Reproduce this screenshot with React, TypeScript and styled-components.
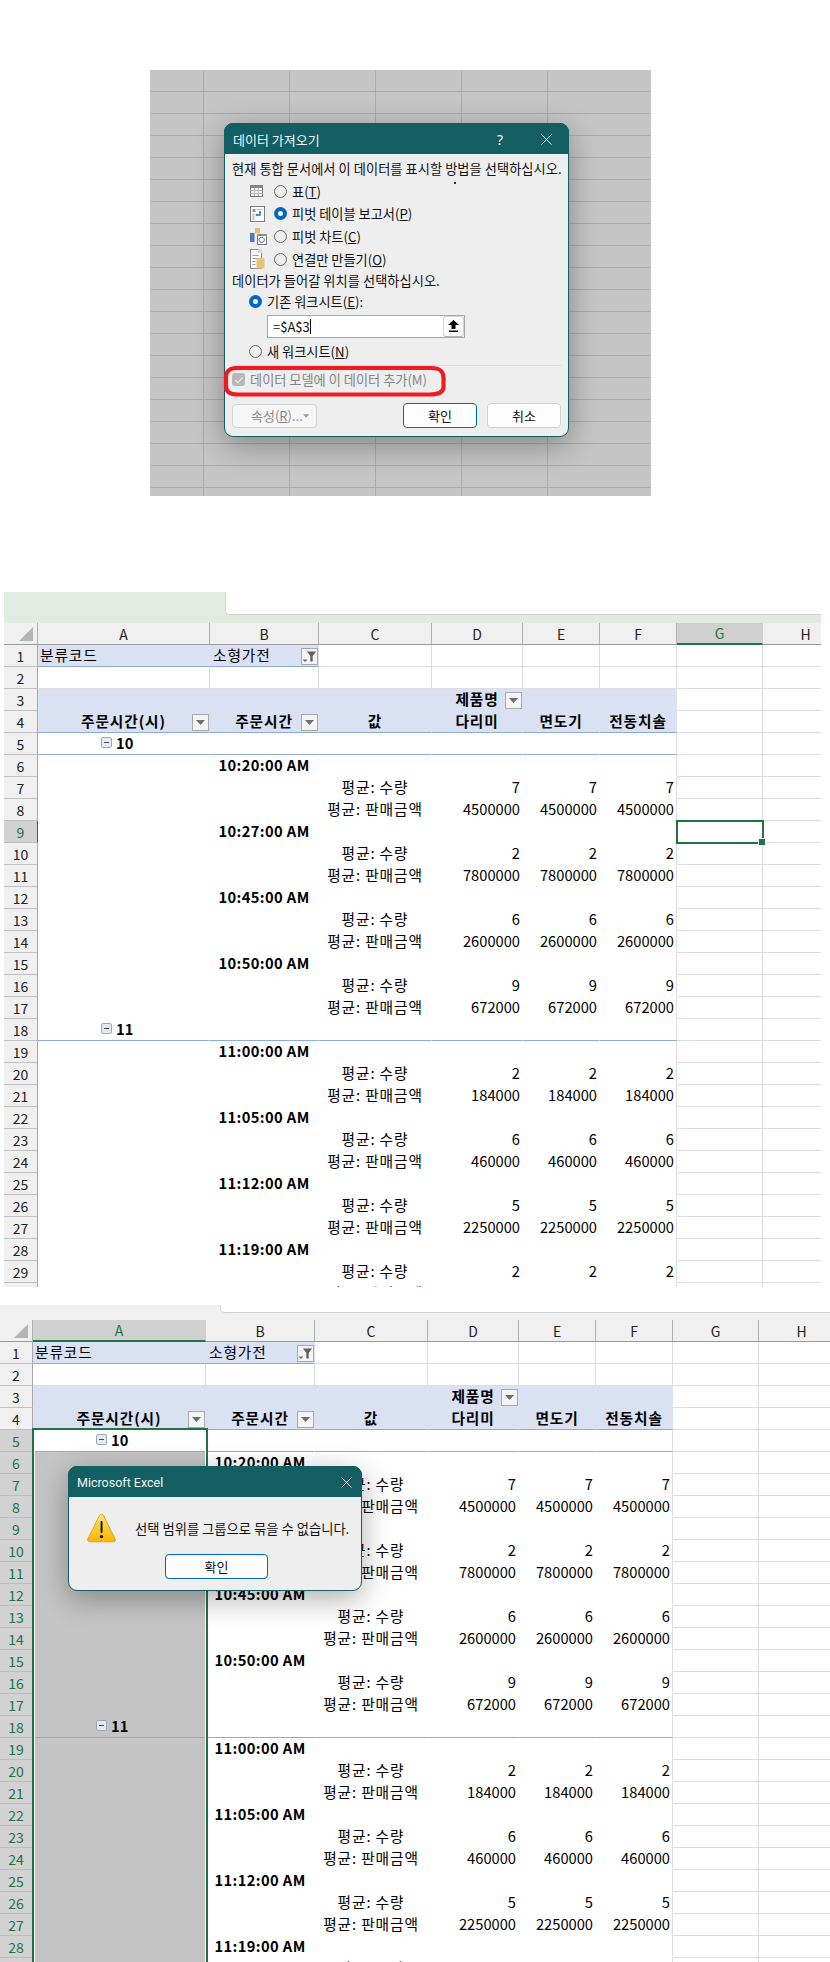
import { Fragment, ReactNode } from "react";
import styled, { createGlobalStyle, css } from "styled-components";

const uiFont = `"Noto Sans CJK KR", "Noto Sans", sans-serif`;
const teal = "#125e62";
const excelGreen = "#217346";
const pivotFill = "#d9e1f2";
const pivotLine = "#8ea9db";
const gridLine = "#dedede";

const GlobalStyle = createGlobalStyle`
  html, body {
    margin: 0;
    background: #fff;
  }
  body {
    font-family: ${uiFont};
    color: #000;
  }
`;

const Page = styled.div`
  width: 830px;
  height: 1962px;
  overflow: hidden;
  padding-top: 70px;
  box-sizing: border-box;
`;

/* ---------- dialog parts ---------- */

const backdropColumns = [53, 139, 225, 311, 397];

const BackdropPanel = styled.div`
  width: 501px;
  height: 426px;
  margin-left: 150px;
  box-sizing: border-box;
  padding: 53px 0 0 74px;
  overflow: hidden;
  background-color: #c5c5c5;
  background-image: ${backdropColumns.map(() => "linear-gradient(#acacac, #acacac)").join(", ")},
    linear-gradient(#acacac 1px, transparent 1px);
  background-size: ${backdropColumns.map(() => "1px 100%").join(", ")}, 100% 22px;
  background-position: ${backdropColumns.map((x) => `${x}px 0`).join(", ")}, 0 21px;
  background-repeat: ${backdropColumns.map(() => "no-repeat").join(", ")}, repeat;
`;

const Dialog = styled.div<{ $width: number }>`
  position: relative;
  width: ${(p) => p.$width}px;
  box-sizing: border-box;
  border: 1px solid ${teal};
  border-radius: 9px;
  background: #eeeeee;
  box-shadow: 0 8px 30px rgba(0, 0, 0, 0.32);
`;

const FloatingDialog = styled(Dialog)`
  position: absolute;
  left: 68px;
  top: 161px;
  z-index: 5;
`;

const TitleBar = styled.div`
  height: 30px;
  display: flex;
  align-items: center;
  margin: -1px -1px 0;
  padding-top: 1px;
  background: ${teal};
  border-radius: 9px 9px 0 0;
  color: #f2f7f7;
`;

const TitleText = styled.div<{ $latin?: boolean }>`
  flex: 1;
  padding-left: 9px;
  font-size: ${(p) => (p.$latin ? "12.5px" : "13px")};
  font-family: ${(p) => (p.$latin ? `Roboto, sans-serif` : uiFont)};
`;

const TitleButton = styled.div<{ $width: number }>`
  width: ${(p) => p.$width}px;
  display: flex;
  justify-content: center;
  font-size: 14px;
  font-family: "Noto Sans", sans-serif;
`;

const DialogBody = styled.div`
  padding: 4px 7px 8px;
  font-size: 13.2px;
  color: #111;
`;

const Prompt = styled.div<{ $height: number }>`
  height: ${(p) => p.$height}px;
  line-height: ${(p) => p.$height}px;
  white-space: nowrap;
  letter-spacing: 0.06px;
`;

const OptionRow = styled.div`
  height: 22.67px;
  display: flex;
  align-items: center;
  padding-left: 18px;
`;

const IconSlot = styled.div`
  width: 24px;
  height: 22px;
  display: flex;
  align-items: center;
`;

const TargetRow = styled.div<{ $top: number }>`
  height: 22px;
  margin-top: ${(p) => p.$top}px;
  display: flex;
  align-items: center;
  padding-left: 17px;
`;

const Radio = styled.span<{ $on?: boolean }>`
  width: 13px;
  height: 13px;
  flex: none;
  margin-right: 5px;
  border-radius: 50%;
  box-sizing: border-box;
  background: ${(p) => (p.$on ? "#fff" : "transparent")};
  border: ${(p) => (p.$on ? "4px solid #0067c0" : "1px solid #666")};
`;

const Hotkey = styled.span`
  text-decoration: underline;
`;

const RangeField = styled.div`
  width: 198px;
  height: 23px;
  box-sizing: border-box;
  margin: 2px 0 0 35px;
  padding-left: 5px;
  display: flex;
  align-items: center;
  justify-content: space-between;
  background: #fff;
  border: 1px solid #a8a8a8;
  font-size: 13px;
`;

const RangeText = styled.span`
  display: flex;
  align-items: center;
`;

const Caret = styled.span`
  width: 1px;
  height: 15px;
  background: #000;
`;

const RangeButton = styled.span`
  width: 21px;
  height: 21px;
  display: flex;
  align-items: center;
  justify-content: center;
  box-sizing: border-box;
  border: 1px solid #d4d4d4;
  border-bottom-color: #b5b5b5;
  border-radius: 3px;
  background: #fbfbfb;
`;

const Divider = styled.div`
  height: 1px;
  margin-top: 2px;
  background: #dcdcdc;
`;

const CheckRow = styled.div`
  height: 28px;
  display: flex;
  align-items: center;
  gap: 5px;
  color: #858585;
`;

const CheckBox = styled.span`
  width: 13px;
  height: 13px;
  border-radius: 3px;
  background: #b8b8b8;
  display: flex;
  align-items: center;
  justify-content: center;
`;

const Actions = styled.div`
  margin-top: 9px;
  height: 25px;
  display: flex;
  align-items: flex-end;
`;

const PushButton = styled.div<{ $width: number; $primary?: boolean; $left?: number }>`
  width: ${(p) => p.$width}px;
  height: 25px;
  margin-left: ${(p) => p.$left ?? 0}px;
  box-sizing: border-box;
  display: flex;
  align-items: center;
  justify-content: center;
  border-radius: 4px;
  font-size: 13px;
  background: #fdfdfd;
  color: #111;
  border: 1px solid ${(p) => (p.$primary ? "#0067c0" : "#d2d2d2")};
`;

const DisabledSplitButton = styled.div`
  width: 85px;
  height: 24px;
  box-sizing: border-box;
  padding: 0 7px 0 18px;
  display: flex;
  align-items: center;
  justify-content: space-between;
  border-radius: 4px;
  font-size: 13px;
  white-space: nowrap;
  background: #f6f6f6;
  color: #8a8a8a;
  border: 1px solid #d2d2d2;
`;

const RedMark = styled.svg`
  position: absolute;
  left: -2px;
  top: 241px;
`;

const StrayDot = styled.span`
  position: absolute;
  left: 229px;
  top: 58px;
  width: 2px;
  height: 2px;
  background: #333;
`;

const AlertRow = styled.div`
  display: flex;
  align-items: center;
  gap: 19px;
  padding: 16px 0 0 18px;
  font-size: 13.3px;
  white-space: nowrap;
  color: #111;
`;

const AlertActions = styled.div`
  display: flex;
  padding: 11px 0 11px 96px;
`;

/* ---------- sheet parts ---------- */

const SheetFrame = styled.div<{ $left: number; $top: number; $width: number; $height: number }>`
  position: relative;
  margin: ${(p) => p.$top}px 0 0 ${(p) => p.$left}px;
  width: ${(p) => p.$width}px;
  height: ${(p) => p.$height}px;
  overflow: hidden;
`;

const TabBand = styled.div<{ $fill: string; $height: number }>`
  height: ${(p) => p.$height}px;
  background: ${(p) => p.$fill};
`;

const TabNotch = styled.div<{ $left: number; $height: number }>`
  margin-left: ${(p) => p.$left}px;
  height: ${(p) => p.$height}px;
  box-sizing: border-box;
  background: #fff;
  border-left: 1px solid #d6d6d6;
  border-bottom: 1px solid #d0d0d0;
  border-bottom-left-radius: 5px;
`;

const SheetGrid = styled.div<{ $columns: number[] }>`
  display: grid;
  grid-template-columns: ${(p) => p.$columns.map((c) => `${c}px`).join(" ")};
  grid-auto-rows: 22px;
  font-size: 14.7px;
`;

const Corner = styled.div`
  position: relative;
  box-sizing: border-box;
  background: #f0f0f0;
  border-right: 1px solid #b0b0b0;
  border-bottom: 1px solid #9a9a9a;

  &::after {
    content: "";
    position: absolute;
    right: 4px;
    bottom: 3px;
    width: 14px;
    height: 14px;
    background: #b5b5b5;
    clip-path: polygon(100% 0, 100% 100%, 0 100%);
  }
`;

const ColumnHead = styled.div<{ $on?: boolean }>`
  box-sizing: border-box;
  display: flex;
  align-items: center;
  justify-content: center;
  font-size: 14px;
  background: ${(p) => (p.$on ? "#d0d0d0" : "#f0f0f0")};
  color: ${(p) => (p.$on ? excelGreen : "#222")};
  border-right: 1px solid ${(p) => (p.$on ? "#d0d0d0" : "#b0b0b0")};
  border-bottom: ${(p) => (p.$on ? `2px solid ${excelGreen}` : "1px solid #9a9a9a")};
`;

const RowHead = styled.div<{ $on?: boolean }>`
  box-sizing: border-box;
  display: flex;
  align-items: center;
  justify-content: center;
  font-size: 14px;
  background: ${(p) => (p.$on ? "#d2d2d2" : "#f0f0f0")};
  color: ${(p) => (p.$on ? excelGreen : "#222")};
  border-right: ${(p) => (p.$on ? `1px solid ${excelGreen}` : "1px solid #a8a8a8")};
  border-bottom: 1px solid ${(p) => (p.$on ? "#bdbdbd" : "#c0c0c0")};
`;

type Edge = "grid" | "blue" | "none";
type Selection = "first" | "rest";

const edgeColor = (edge: Edge) =>
  edge === "grid" ? gridLine : edge === "blue" ? pivotLine : "transparent";

const Cell = styled.div<{
  $fill?: boolean;
  $bottom: Edge;
  $right: Edge;
  $align: "left" | "center" | "right";
  $bold?: boolean;
  $indent?: number;
  $selection?: Selection;
  $active?: boolean;
}>`
  position: relative;
  box-sizing: border-box;
  display: flex;
  align-items: center;
  white-space: nowrap;
  padding: 0 2px 3px ${(p) => p.$indent ?? 2}px;
  justify-content: ${(p) =>
    p.$align === "left" ? "flex-start" : p.$align === "right" ? "flex-end" : "center"};
  font-weight: ${(p) => (p.$bold ? 700 : 400)};
  background: ${(p) =>
    p.$selection === "rest" ? "#c5c5c5" : p.$fill ? pivotFill : "#fff"};
  border-bottom: 1px solid ${(p) => edgeColor(p.$bottom)};
  border-right: 1px solid ${(p) => edgeColor(p.$right)};

  ${(p) =>
    p.$selection &&
    css`
      z-index: 2;
      &::before {
        content: "";
        position: absolute;
        top: ${p.$selection === "first" ? "-2px" : "0"};
        bottom: -1px;
        left: -1px;
        right: -3px;
        border: 2px solid ${excelGreen};
        border-bottom: 0;
        border-top-width: ${p.$selection === "first" ? "2px" : "0"};
        box-shadow: inset 1px 0 #fff, inset -1px 0 #fff;
      }
    `}

  ${(p) =>
    p.$active &&
    css`
      z-index: 2;
      outline: 2px solid ${excelGreen};
      outline-offset: -1px;
      &::after {
        content: "";
        position: absolute;
        right: -3px;
        bottom: -3px;
        width: 6px;
        height: 6px;
        background: ${excelGreen};
        border: 1px solid #fff;
        border-width: 1px 0 0 1px;
      }
    `}
`;

const FieldButton = styled.span`
  position: absolute;
  right: 0;
  bottom: 1px;
  width: 17px;
  height: 17px;
  z-index: 3;
  box-sizing: border-box;
  display: flex;
  align-items: center;
  justify-content: center;
  background: #f4f4f4;
  border: 1px solid #a9a9a9;
`;

const CollapseBox = styled.span`
  width: 11px;
  height: 11px;
  margin-right: 4px;
  position: relative;
  z-index: 3;
  box-sizing: border-box;
  display: flex;
  align-items: center;
  justify-content: center;
  border: 1px solid #9aa9c2;
  border-radius: 2px;
  background: #e6e9f0;

  &::after {
    content: "";
    width: 5px;
    height: 1px;
    background: #4a4a4a;
  }
`;

const CellText = styled.span<{ $tracking: number }>`
  position: relative;
  z-index: 3;
  letter-spacing: ${(p) => p.$tracking}px;
`;

/* ---------- icons ---------- */

const CloseIcon = () => (
  <svg width="11" height="11" viewBox="0 0 11 11">
    <path d="M.5.5l10 10M10.5.5l-10 10" stroke="#f2f7f7" strokeWidth="1" fill="none" />
  </svg>
);

const DropIcon = () => (
  <svg width="9" height="5" viewBox="0 0 9 5">
    <path d="M0 0h9L4.5 5z" fill="#6e6e6e" />
  </svg>
);

const SmallDropIcon = () => (
  <svg width="7" height="4" viewBox="0 0 7 4">
    <path d="M0 0h7L3.500 4z" fill="#9a9a9a" />
  </svg>
);

const FilterIcon = () => (
  <svg width="15" height="15" viewBox="0 0 15 15">
    <path d="M5 2.5h9L10.7 7v5.5H8.3V7z" fill="#5f5f5f" />
    <path d="M.5 10.5h5L3 13z" fill="#6e6e6e" />
  </svg>
);

const TableIcon = () => (
  <svg width="14" height="12" viewBox="0 0 14 12">
    <rect x=".5" y=".5" width="12" height="11" fill="#f6f6f6" stroke="#7c7c7c" />
    <rect x="1" y="1" width="11" height="2" fill="#8a8a8a" />
    <path d="M.5 5.5h12M.5 8.5h12M4.5 3v8M8.5 3v8" stroke="#b5b5b5" />
  </svg>
);

const PivotIcon = () => (
  <svg width="15" height="16" viewBox="0 0 15 16">
    <rect x=".5" y=".5" width="14" height="15" fill="#fafafa" stroke="#7c7c7c" />
    <rect x="2.5" y="3" width="3" height="3" fill="#9a9a9a" />
    <rect x="6.5" y="3" width="6" height="1" fill="#c4c4c4" />
    <rect x="2.5" y="7.5" width="2" height="6" fill="#c4c4c4" />
    <path d="M10 5.5v3.5H6.5" stroke="#2f6fb5" strokeWidth="1.3" fill="none" />
    <path d="M8.6 6.6L10 4.6l1.4 2zM7.2 7.6L5.4 9l1.8 1.4z" fill="#2f6fb5" />
  </svg>
);

const PivotChartIcon = () => (
  <svg width="17" height="17" viewBox="0 0 17 17">
    <rect x="0" y="5" width="4.5" height="9" fill="#4d7ab8" />
    <rect x="5" y="0" width="5" height="5" fill="#e3bb78" />
    <rect x="7.5" y="6.5" width="9" height="10" fill="#fafafa" stroke="#7c7c7c" />
    <rect x="7" y="6" width="10" height="2" fill="#8a8a8a" />
    <path d="M14 10.5a2.6 2.6 0 1 1-1-1" stroke="#2f6fb5" fill="none" />
  </svg>
);

const ConnectionIcon = () => (
  <svg width="15" height="22" viewBox="0 0 15 22">
    <path d="M.5 1.5h8l3 3v16H.5z" fill="#fafafa" stroke="#8a8a8a" />
    <path d="M2.5 7.5h6M2.5 10.5h6M2.5 13.5h3M2.5 16.5h3" stroke="#9a9a9a" />
    <rect x="6.5" y="10" width="8" height="10.5" fill="#e8c27f" />
    <rect x="8" y="1" width="4" height="4" fill="#d9d9d9" />
  </svg>
);

const UploadIcon = () => (
  <svg width="11" height="12" viewBox="0 0 11 12">
    <path d="M5.5 0L11 5H7.5v4h-4V5H0z" fill="#000" />
    <rect x="1" y="10.5" width="9" height="1.5" fill="#000" />
  </svg>
);

const CheckIcon = () => (
  <svg width="10" height="10" viewBox="0 0 10 10">
    <path d="M1.5 5.2l2.4 2.4 4.6-5" stroke="#e4e4e4" strokeWidth="1.3" fill="none" />
  </svg>
);

const WarningIcon = () => (
  <svg width="29" height="30" viewBox="0 0 29 30">
    <defs>
      <linearGradient id="warn" x1="0" y1="0" x2="0" y2="1">
        <stop offset="0" stopColor="#ffe66b" />
        <stop offset="1" stopColor="#f9b400" />
      </linearGradient>
    </defs>
    <path
      d="M14.5 1.2c.9 0 1.5.5 2 1.3l11.6 23.4c.7 1.5-.2 2.9-1.8 2.9H2.7c-1.6 0-2.5-1.4-1.8-2.9L12.5 2.5c.5-.8 1.1-1.3 2-1.3z"
      fill="url(#warn)"
      stroke="#e09a00"
      strokeWidth=".8"
    />
    <rect x="13.6" y="8" width="1.9" height="12" rx=".9" fill="#111" />
    <circle cx="14.5" cy="23.6" r="1.7" fill="#111" />
  </svg>
);

/* ---------- data ---------- */

type PivotGroup = {
  hour: string;
  times: { time: string; qty?: number; amount?: number }[];
};

const pivotGroups: PivotGroup[] = [
  {
    hour: "10",
    times: [
      { time: "10:20:00 AM", qty: 7, amount: 4500000 },
      { time: "10:27:00 AM", qty: 2, amount: 7800000 },
      { time: "10:45:00 AM", qty: 6, amount: 2600000 },
      { time: "10:50:00 AM", qty: 9, amount: 672000 },
    ],
  },
  {
    hour: "11",
    times: [
      { time: "11:00:00 AM", qty: 2, amount: 184000 },
      { time: "11:05:00 AM", qty: 6, amount: 460000 },
      { time: "11:12:00 AM", qty: 5, amount: 2250000 },
      { time: "11:19:00 AM", qty: 2 },
    ],
  },
];

type BodyRow =
  | { kind: "hour"; label: string }
  | { kind: "time"; label: string }
  | { kind: "value"; label: string; value?: number };

const bodyRows: BodyRow[] = pivotGroups.flatMap((group) => [
  { kind: "hour", label: group.hour } as BodyRow,
  ...group.times.flatMap((t) => {
    const rows: BodyRow[] = [
      { kind: "time", label: t.time },
      { kind: "value", label: "평균: 수량", value: t.qty },
      { kind: "value", label: "평균: 판매금액", value: t.amount },
    ];
    return rows;
  }),
]);

const letters = ["A", "B", "C", "D", "E", "F", "G", "H"];

type CellSpec = {
  text?: string | number;
  fill?: boolean;
  bottom?: Edge;
  right?: Edge;
  align?: "left" | "center" | "right";
  bold?: boolean;
  indent?: number;
  button?: "drop" | "filter";
  collapse?: boolean;
};

// Malgun Gothic sets hangul wider than Noto does, times a little wider too
const trackingFor = (cell: CellSpec) => {
  if (typeof cell.text !== "string") return 0;
  if (/[가-힣]/.test(cell.text)) return 0.9;
  return cell.text.includes(":") ? 0.4 : 0;
};

const headerRow = (specs: CellSpec[]): CellSpec[] => {
  const tail: CellSpec[] = [
    { bottom: "grid", right: "grid" },
    { bottom: "grid", right: "grid" },
  ];
  return [...specs, ...tail];
};

const topRows = (): CellSpec[][] => {
  const plain: CellSpec = { bottom: "grid", right: "grid" };
  const head3: CellSpec = { fill: true, bottom: "none", right: "none" };
  const head4: CellSpec = { fill: true, bottom: "blue", right: "none", bold: true, align: "center" };
  return [
    [
      { text: "분류코드", fill: true, bottom: "blue", right: "none", align: "left" },
      { text: "소형가전", fill: true, bottom: "blue", right: "none", align: "left", indent: 3, button: "filter" },
      plain, plain, plain, plain, plain, plain,
    ],
    [plain, plain, plain, plain, plain, plain, plain, plain],
    headerRow([
      head3, head3, head3,
      { ...head3, text: "제품명", bold: true, align: "center", button: "drop" },
      head3, head3,
    ]),
    headerRow([
      { ...head4, text: "주문시간(시)", button: "drop" },
      { ...head4, text: "주문시간", button: "drop" },
      { ...head4, text: "값" },
      { ...head4, text: "다리미" },
      { ...head4, text: "면도기" },
      { ...head4, text: "전동치솔" },
    ]),
  ];
};

const bodyCells = (row: BodyRow): CellSpec[] => {
  const blank: CellSpec = { bottom: row.kind === "hour" ? "blue" : "none", right: "none" };
  const last: CellSpec = { ...blank, right: "grid" };
  const tail: CellSpec[] = [
    { bottom: "grid", right: "grid" },
    { bottom: "grid", right: "grid" },
  ];
  if (row.kind === "hour") {
    return [
      { ...blank, text: row.label, bold: true, align: "left", indent: 63, collapse: true },
      blank, blank, blank, blank, last, ...tail,
    ];
  }
  if (row.kind === "time") {
    return [blank, { ...blank, text: row.label, bold: true, align: "center" }, blank, blank, blank, last, ...tail];
  }
  const value: CellSpec = { ...blank, text: row.value, align: "right" };
  return [
    blank, blank,
    { ...blank, text: row.label, align: "center" },
    value, value,
    { ...value, right: "grid" },
    ...tail,
  ];
};

/* ---------- sheet ---------- */

type SheetProps = {
  left: number;
  top: number;
  width: number;
  height: number;
  columns: number[];
  bandFill: string;
  bandHeight: number;
  notchLeft: number;
  notchHeight: number;
  rowCount: number;
  activeCell?: { row: number; col: number };
  columnSelected?: boolean;
  children?: ReactNode;
};

const Sheet = ({
  left,
  top,
  width,
  height,
  columns,
  bandFill,
  bandHeight,
  notchLeft,
  notchHeight,
  rowCount,
  activeCell,
  columnSelected,
  children,
}: SheetProps) => {
  const rows: CellSpec[][] = [...topRows(), ...bodyRows.map(bodyCells)];
  // row 30 only peeks out under the fold of the first capture
  const overflowRow = bodyCells({ kind: "value", label: "평균: 판매금액" });
  const visible = [...rows, overflowRow].slice(0, rowCount);

  return (
    <SheetFrame $left={left} $top={top} $width={width} $height={height}>
      <TabBand $fill={bandFill} $height={bandHeight}>
        <TabNotch $left={notchLeft} $height={notchHeight} />
      </TabBand>
      <SheetGrid $columns={columns}>
        <Corner />
        {letters.map((letter, col) => (
          <ColumnHead
            key={letter}
            $on={activeCell ? activeCell.col === col : columnSelected && col === 0}
          >
            {letter}
          </ColumnHead>
        ))}
        {visible.map((cells, r) => {
          const rowNo = r + 1;
          const selectedRow = columnSelected && rowNo >= 5;
          return (
            <Fragment key={rowNo}>
              <RowHead $on={activeCell ? activeCell.row === rowNo : selectedRow}>{rowNo}</RowHead>
              {cells.map((cell, col) => (
                <Cell
                  key={col}
                  $fill={cell.fill}
                  $bottom={cell.bottom ?? "none"}
                  $right={cell.right ?? "none"}
                  $align={cell.align ?? "left"}
                  $bold={cell.bold}
                  $indent={cell.indent}
                  $selection={selectedRow && col === 0 ? (rowNo === 5 ? "first" : "rest") : undefined}
                  $active={activeCell?.row === rowNo && activeCell.col === col}
                >
                  {cell.collapse && <CollapseBox />}
                  {cell.text !== undefined && (
                    <CellText $tracking={trackingFor(cell)}>{cell.text}</CellText>
                  )}
                  {cell.button && (
                    <FieldButton>{cell.button === "filter" ? <FilterIcon /> : <DropIcon />}</FieldButton>
                  )}
                </Cell>
              ))}
            </Fragment>
          );
        })}
      </SheetGrid>
      {children}
    </SheetFrame>
  );
};

/* ---------- dialogs ---------- */

const ImportDialog = () => (
  <Dialog $width={345}>
    <TitleBar>
      <TitleText>데이터 가져오기</TitleText>
      <TitleButton $width={46}>?</TitleButton>
      <TitleButton $width={46}>
        <CloseIcon />
      </TitleButton>
    </TitleBar>
    <DialogBody>
      <Prompt $height={22}>현재 통합 문서에서 이 데이터를 표시할 방법을 선택하십시오.</Prompt>
      <OptionRow>
        <IconSlot><TableIcon /></IconSlot>
        <Radio />
        <span>표(<Hotkey>T</Hotkey>)</span>
      </OptionRow>
      <OptionRow>
        <IconSlot><PivotIcon /></IconSlot>
        <Radio $on />
        <span>피벗 테이블 보고서(<Hotkey>P</Hotkey>)</span>
      </OptionRow>
      <OptionRow>
        <IconSlot><PivotChartIcon /></IconSlot>
        <Radio />
        <span>피벗 차트(<Hotkey>C</Hotkey>)</span>
      </OptionRow>
      <OptionRow>
        <IconSlot><ConnectionIcon /></IconSlot>
        <Radio />
        <span>연결만 만들기(<Hotkey>O</Hotkey>)</span>
      </OptionRow>
      <Prompt $height={20}>데이터가 들어갈 위치를 선택하십시오.</Prompt>
      <TargetRow $top={0}>
        <Radio $on />
        <span>기존 워크시트(<Hotkey>E</Hotkey>):</span>
      </TargetRow>
      <RangeField>
        <RangeText>=$A$3<Caret /></RangeText>
        <RangeButton><UploadIcon /></RangeButton>
      </RangeField>
      <TargetRow $top={3}>
        <Radio />
        <span>새 워크시트(<Hotkey>N</Hotkey>)</span>
      </TargetRow>
      <Divider />
      <CheckRow>
        <CheckBox><CheckIcon /></CheckBox>
        <span>데이터 모델에 이 데이터 추가(M)</span>
      </CheckRow>
      <Actions>
        <DisabledSplitButton>
          <span>속성(<Hotkey>R</Hotkey>)...</span>
          <SmallDropIcon />
        </DisabledSplitButton>
        <PushButton $width={74} $left={86} $primary>확인</PushButton>
        <PushButton $width={74} $left={10}>취소</PushButton>
      </Actions>
    </DialogBody>
    <StrayDot />
    <RedMark width="224" height="33" viewBox="0 0 224 33">
      <path
        d="M13 3H208C217 3 220.500 6 220.500 13V22C220.500 27 216 29.500 207 29.500H15C7 29.500 3 27 3 21V12C3 6 7 3 13 3Z"
        fill="none"
        stroke="#ed1c24"
        strokeWidth="4.2"
      />
    </RedMark>
  </Dialog>
);

const AlertDialog = () => (
  <FloatingDialog $width={294}>
    <TitleBar>
      <TitleText $latin>Microsoft Excel</TitleText>
      <TitleButton $width={31}>
        <CloseIcon />
      </TitleButton>
    </TitleBar>
    <AlertRow>
      <WarningIcon />
      <span>선택 범위를 그룹으로 묶을 수 없습니다.</span>
    </AlertRow>
    <AlertActions>
      <PushButton $width={103} $primary>확인</PushButton>
    </AlertActions>
  </FloatingDialog>
);

export default function App() {
  return (
    <>
      <GlobalStyle />
      <Page>
        <BackdropPanel>
          <ImportDialog />
        </BackdropPanel>
        <Sheet
          left={4}
          top={96}
          width={817}
          height={695}
          columns={[34, 172, 109, 113, 91, 77, 77, 86, 86]}
          bandFill="#e2ebe0"
          bandHeight={31}
          notchLeft={221}
          notchHeight={23}
          rowCount={30}
          activeCell={{ row: 9, col: 6 }}
        />
        <Sheet
          left={0}
          top={18}
          width={830}
          height={657}
          columns={[33, 173, 109, 113, 91, 77, 77, 86, 86]}
          bandFill="#f0f0f0"
          bandHeight={15}
          notchLeft={220}
          notchHeight={8}
          rowCount={29}
          columnSelected
        >
          <AlertDialog />
        </Sheet>
      </Page>
    </>
  );
}
